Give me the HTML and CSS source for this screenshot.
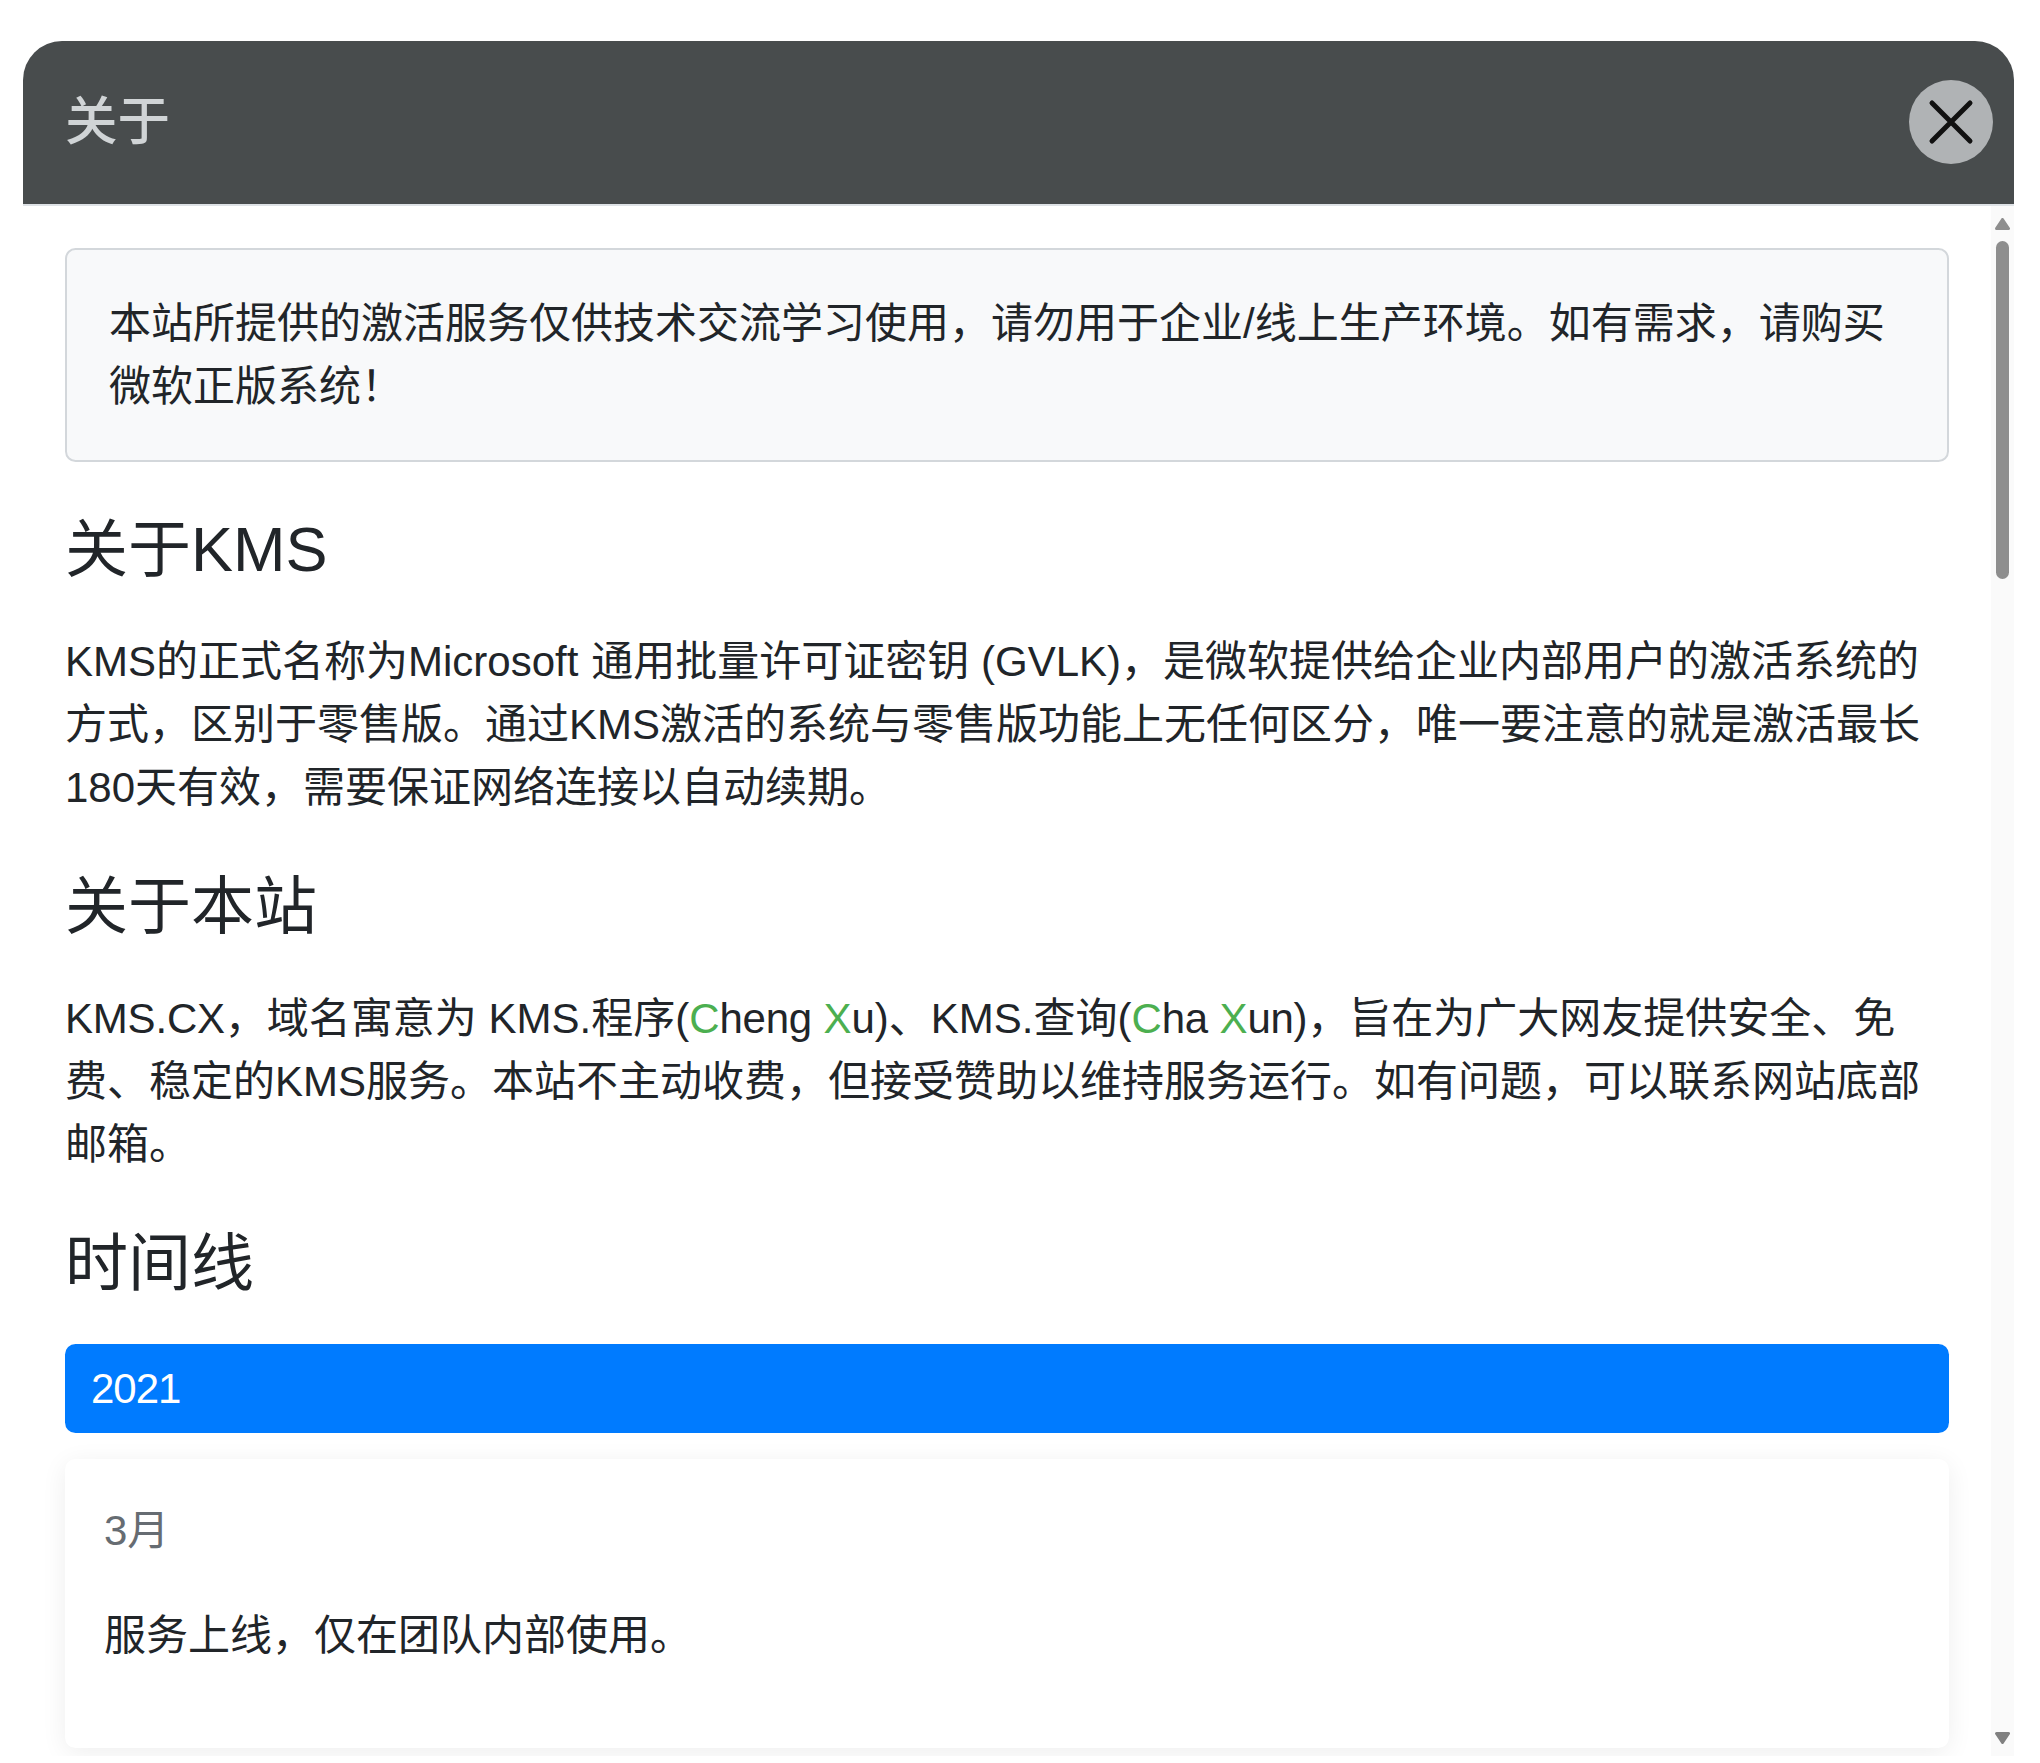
FILE: index.html
```html
<!DOCTYPE html>
<html lang="zh-CN">
<head>
<meta charset="utf-8">
<title>关于</title>
<link rel="stylesheet" href="styles.css">
</head>
<body>
<div class="modal">
  <header class="modal-header">
    <h5 class="modal-title">关于</h5>
    <button class="close" type="button" aria-label="关闭">
      <svg width="84" height="84" viewBox="0 0 84 84"><path d="M23 23 L61 61 M61 23 L23 61" fill="none" stroke="#111" stroke-width="5" stroke-linecap="round"/></svg>
    </button>
  </header>
  <div class="modal-main">
    <div class="modal-body">
      <div class="notice">本站所提供的激活服务仅供技术交流学习使用，请勿用于企业/线上生产环境。如有需求，请购买微软正版系统！</div>
      <h4 class="section-title">关于KMS</h4>
      <p class="para">KMS的正式名称为<span class="wide-space">Microsoft </span>通用批量许可证密钥 (GVLK)，是微软提供给企业内部用户的激活系统的方式，区别于零售版。通过KMS激活的系统与零售版功能上无任何区分，唯一要注意的就是激活最长180天有效，需要保证网络连接以自动续期。</p>
      <h4 class="section-title">关于本站</h4>
      <p class="para"><span class="tight-1">KMS.CX</span>，域名寓意为 KMS.程序(<span class="hl">C</span><span class="tight-2">heng </span><span class="hl">X</span>u)、KMS.查询(<span class="hl">C</span><span class="tight-2">ha </span><span class="hl">X</span><span class="tight-2">un)</span>，旨在为广大网友提供安全、免费、稳定的KMS服务。本站不主动收费，但接受赞助以维持服务运行。如有问题，可以联系网站底部邮箱。</p>
      <h4 class="section-title">时间线</h4>
      <div class="year">2021</div>
      <div class="event">
        <div class="event-date">3月</div>
        <p class="para">服务上线，仅在团队内部使用。</p>
      </div>
    </div>
    <div class="scrollbar" aria-hidden="true">
      <svg class="arrow" width="15" height="12" viewBox="0 0 15 12"><path d="M7.5 1.5 L13.5 10.5 L1.5 10.5 Z" fill="#8e8e8e" stroke="#8e8e8e" stroke-width="3" stroke-linejoin="round"/></svg>
      <div class="thumb"></div>
      <div class="track-space"></div>
      <svg class="arrow" width="15" height="12" viewBox="0 0 15 12"><path d="M7.5 10.5 L13.5 1.5 L1.5 1.5 Z" fill="#808080" stroke="#808080" stroke-width="3" stroke-linejoin="round"/></svg>
    </div>
  </div>
</div>
</body>
</html>
```
FILE: styles.css
```css
* { box-sizing: border-box; }
html, body { margin: 0; padding: 0; background: #fff; }
body {
  height: 1763px;
  overflow: hidden;
  padding: 41px 26px 7px 23px;
  font-family: "Liberation Sans", "Noto Sans CJK SC", sans-serif;
  font-size: 42px;
  line-height: 63px;
  color: #212529;
}
.modal {
  display: flex;
  flex-direction: column;
  height: 1715px;
  background: #fff;
  border-radius: 39px 39px 0 0;
  overflow: hidden;
}
.modal-header {
  flex: none;
  display: flex;
  align-items: center;
  justify-content: space-between;
  height: 165px;
  padding: 0 21px 2px 42px;
  background: #484c4d;
  border-bottom: 2px solid #dee2e6;
}
.modal-title {
  margin: 0;
  font-size: 52.5px;
  font-weight: 500;
  line-height: 79px;
  color: #d0d4d6;
}
.close {
  width: 84px;
  height: 84px;
  padding: 0;
  border: 0;
  border-radius: 50%;
  background: #b0b3b5;
  display: flex;
}
.modal-main {
  flex: 1;
  min-height: 0;
  display: flex;
}
.modal-body {
  flex: 1;
  min-width: 0;
  padding: 42px 42px 0;
  overflow: hidden;
}
.notice {
  padding: 42px 42px 42px;
  background: #f8f9fa;
  border: 2px solid #d3d7db;
  border-radius: 10.5px;
  margin-bottom: 40px;
}
.section-title {
  margin: 0 0 33.5px;
  font-size: 63px;
  font-weight: 400;
  line-height: 94.5px;
}
.para { margin: 0 0 40px; }
.hl { color: #4caf50; }
.wide-space { word-spacing: 1.3px; }
.tight-1 { letter-spacing: -0.2px; }
.tight-2 { letter-spacing: -0.25px; }
.year {
  height: 89px;
  padding: 13px 26px;
  background: #007bff;
  color: #fff;
  border-radius: 10.5px;
  margin-bottom: 26px;
  letter-spacing: -1px;
}
.event {
  padding: 40px 39px 41px;
  background: #fff;
  border-radius: 10.5px;
  box-shadow: 0 5px 26px rgba(0, 0, 0, 0.07);
}
.event-date {
  color: #666c72;
  margin-bottom: 42px;
}
.scrollbar {
  flex: none;
  width: 23px;
  background: #fafafa;
  display: flex;
  flex-direction: column;
  align-items: center;
  padding: 12px 0 12px;
}
.arrow { flex: none; }
.thumb {
  flex: none;
  width: 13px;
  height: 338px;
  margin-top: 11px;
  background: #8e8e8e;
  border-radius: 7px;
}
.track-space { flex: 1; }
```
